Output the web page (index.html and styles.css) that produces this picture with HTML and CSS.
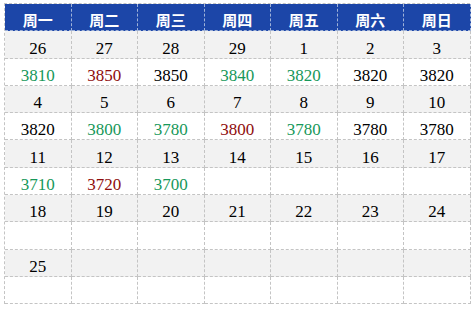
FILE: index.html
```html
<!DOCTYPE html>
<html>
<head>
<meta charset="utf-8">
<link rel="stylesheet" href="styles.css">
</head>
<body>
<div class="cal">
  <div class="c h">周一</div><div class="c h">周二</div><div class="c h">周三</div><div class="c h">周四</div><div class="c h">周五</div><div class="c h">周六</div><div class="c h">周日</div>

  <div class="c d">26</div><div class="c d">27</div><div class="c d">28</div><div class="c d">29</div><div class="c d">1</div><div class="c d">2</div><div class="c d">3</div>
  <div class="c p up">3810</div><div class="c p dn">3850</div><div class="c p">3850</div><div class="c p up">3840</div><div class="c p up">3820</div><div class="c p">3820</div><div class="c p">3820</div>

  <div class="c d">4</div><div class="c d">5</div><div class="c d">6</div><div class="c d">7</div><div class="c d">8</div><div class="c d">9</div><div class="c d">10</div>
  <div class="c p">3820</div><div class="c p up">3800</div><div class="c p up">3780</div><div class="c p dn">3800</div><div class="c p up">3780</div><div class="c p">3780</div><div class="c p">3780</div>

  <div class="c d">11</div><div class="c d">12</div><div class="c d">13</div><div class="c d">14</div><div class="c d">15</div><div class="c d">16</div><div class="c d">17</div>
  <div class="c p up">3710</div><div class="c p dn">3720</div><div class="c p up">3700</div><div class="c p"></div><div class="c p"></div><div class="c p"></div><div class="c p"></div>

  <div class="c d">18</div><div class="c d">19</div><div class="c d">20</div><div class="c d">21</div><div class="c d">22</div><div class="c d">23</div><div class="c d">24</div>
  <div class="c p"></div><div class="c p"></div><div class="c p"></div><div class="c p"></div><div class="c p"></div><div class="c p"></div><div class="c p"></div>

  <div class="c d">25</div><div class="c d"></div><div class="c d"></div><div class="c d"></div><div class="c d"></div><div class="c d"></div><div class="c d"></div>
  <div class="c p"></div><div class="c p"></div><div class="c p"></div><div class="c p"></div><div class="c p"></div><div class="c p"></div><div class="c p"></div>
</div>
</body>
</html>
```
FILE: styles.css
```css
html, body {
  margin: 0;
  padding: 0;
  background: #ffffff;
}
body {
  padding: 3px 0 0 4px;
}
.cal {
  display: grid;
  grid-template-columns: repeat(7, 66.5px);
  grid-template-rows: repeat(11, 27.3px);
  width: 465.5px;
  border-top: 1px dashed #c4c4c4;
  border-left: 1px dashed #c4c4c4;
  box-sizing: border-box;
}
.c {
  box-sizing: border-box;
  border-right: 1px dashed #c4c4c4;
  border-bottom: 1px dashed #c4c4c4;
  display: flex;
  align-items: flex-end;
  justify-content: center;
  padding-bottom: 1px;
  font-family: "Liberation Serif", "Noto Sans CJK SC", serif;
  font-size: 17px;
  line-height: 17px;
  color: #000000;
}
.h {
  background: #1c46a8;
  color: #ffffff;
  font-family: "Noto Sans CJK SC", sans-serif;
  font-weight: bold;
  font-size: 15px;
  line-height: 17px;
  padding-bottom: 2px;
  border-right-color: #9fb2d8;
  border-bottom-color: #9fb2d8;
}
.d {
  background: #f2f2f2;
}
.p {
  background: #ffffff;
}
.up {
  color: #17985a;
}
.dn {
  color: #8f0d0d;
}
```
